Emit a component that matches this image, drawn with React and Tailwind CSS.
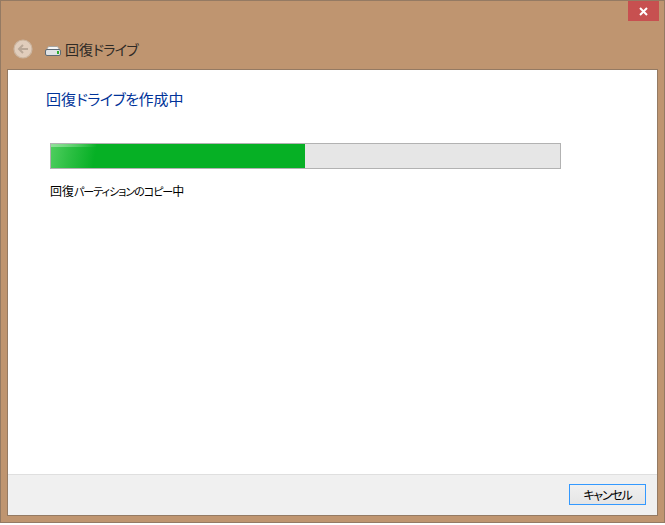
import React from 'react';

const font = 'font-["Noto_Sans_CJK_JP","Liberation_Sans",sans-serif] [font-feature-settings:"palt"]';

const BackButton = () => (
  <svg width="20" height="20" viewBox="0 0 20 20">
    <circle cx="10" cy="10" r="9" fill="#e1cdbc" stroke="#cbb5a0" strokeWidth="1.2" />
    <path d="M15 10H6.5M10 6l-4 4 4 4" fill="none" stroke="#b9a797" strokeWidth="2" />
  </svg>
);

const DriveIcon = () => (
  <svg width="16" height="10" viewBox="0 0 16 10">
    <path d="M3.5 .5h9l2 3h-13z" fill="#f7f7f7" stroke="#a8a49e" />
    <rect x=".5" y="3.5" width="15" height="6" rx="1.5" fill="#dfe2e5" stroke="#5f6b75" />
    <rect x="12" y="5" width="2" height="3" fill="#2fae2f" />
  </svg>
);

export default function App() {
  return (
    <div className={`w-[665px] h-[525px] bg-white ${font}`}>
      <div className="w-full h-[523px] flex flex-col bg-[#bf9570] border border-[#947a63]">
        {/* Title bar */}
        <div className="h-[68px] flex flex-col shrink-0">
          <div className="h-[21px] flex justify-end pr-[5px]">
            <button className="w-[31px] h-[20px] bg-[#c75050] flex items-center justify-center">
              <svg width="9" height="9" viewBox="0 0 9 9">
                <path d="M1 1l7 7M8 1l-7 7" stroke="#fff" strokeWidth="2" />
              </svg>
            </button>
          </div>
          <div className="flex items-center pl-[12px] mt-[17px]">
            <BackButton />
            <div className="ml-[12px] mt-[3px] flex"><DriveIcon /></div>
            <span className="ml-[4px] text-[14px] leading-[20px] text-[#2e2a26]">
              回復<span className="tracking-[-0.75px]">ドライブ</span>
            </span>
          </div>
        </div>

        {/* Content */}
        <div className="flex-1 mx-[6px] mb-[6px] flex flex-col bg-white border border-[#947a63]">
          <div className="flex-1 pt-[19px] pl-[38px]">
            <h1 className="text-[15px] leading-[20px] font-normal text-[#003399]">
              回復<span className="tracking-[-0.5px]">ドライブを</span>作成中
            </h1>
            <div className="mt-[34px] ml-[4px] w-[511px] h-[26px] border border-[#b2b2b2] bg-[#e6e6e6]">
              <div className="relative w-[254px] h-full bg-[#06b025] overflow-hidden">
                <div className="absolute inset-y-0 left-0 w-[50px] bg-[linear-gradient(100deg,#4fce5f_0%,#2fc045_35%,#06b025_85%)]" />
                <div className="absolute top-0 left-0 w-[46px] h-[3px] bg-gradient-to-r from-[#8fe098] to-transparent" />
              </div>
            </div>
            <p className="mt-[13px] ml-[4px] text-[12px] leading-[18px] text-black">
              回復<span className="text-[11px] tracking-[-1px]">パーティションのコピー</span>中
            </p>
          </div>
          <div className="h-[41px] shrink-0 flex justify-end items-start bg-[#f0f0f0] border-t border-[#dfdfdf] pt-[9px] pr-[11px]">
            <button className="w-[77px] h-[21px] border border-[#3399ff] bg-gradient-to-b from-[#f0f0f0] to-[#e5e5e5] text-[12px] leading-[18px] tracking-[-1.2px] text-black">
              キャンセル
            </button>
          </div>
        </div>
      </div>
    </div>
  );
}
